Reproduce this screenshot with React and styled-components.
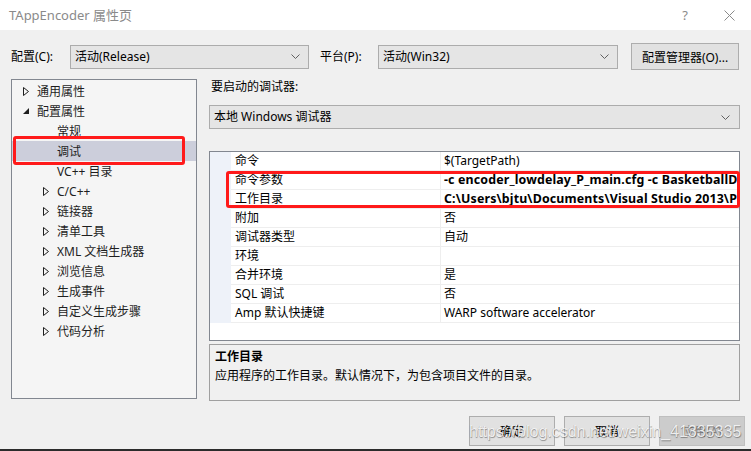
import React from "react";
import styled, { createGlobalStyle, css } from "styled-components";

const Global = createGlobalStyle`
  html, body { margin: 0; padding: 0; background: #f0f0f0; }
  body {
    font-family: "Noto Sans", "Noto Sans CJK SC", sans-serif;
    font-size: 12px;
    color: #000;
  }
  * { box-sizing: border-box; }
`;

const Window = styled.div`
  width: 751px;
  height: 451px;
  display: flex;
  flex-direction: column;
  position: relative;
  overflow: hidden;
  background: #f0f0f0;
`;

const TitleBar = styled.div`
  height: 30px;
  flex-shrink: 0;
  background: #fff;
  display: flex;
  align-items: center;
  padding-left: 9px;
`;

const TitleText = styled.div`
  flex: 1;
  font-size: 13px;
  color: #8a8a8a;
  line-height: 30px;
`;

const TitleButton = styled.div`
  width: 44px;
  height: 30px;
  display: flex;
  align-items: center;
  justify-content: center;
  color: #8a8a8a;
  font-size: 13px;
`;

const Body = styled.div`
  flex: 1;
  display: flex;
  flex-direction: column;
  padding: 13px 11px 0 11px;
`;

const TopRow = styled.div`
  display: flex;
  align-items: center;
  height: 27px;
`;

const FieldLabel = styled.div`
  width: ${(p) => p.$w}px;
  margin-left: ${(p) => p.$ml || 0}px;
  line-height: 24px;
  white-space: nowrap;
`;

const Combo = styled.div`
  width: ${(p) => (p.$w ? `${p.$w}px` : "auto")};
  height: 24px;
  border: 1px solid #acacac;
  background: #e5e5e5;
  display: flex;
  align-items: center;
  justify-content: space-between;
  padding: 0 8px 0 4px;
  white-space: nowrap;
`;

const ComboText = styled.span`
  line-height: 22px;
`;

const Chevron = () => (
  <svg width="9" height="5" viewBox="0 0 9 5">
    <polyline points="0.5,0.5 4.5,4.5 8.5,0.5" fill="none" stroke="#606060" strokeWidth="1" />
  </svg>
);

const PushButton = styled.div`
  width: ${(p) => p.$w}px;
  height: ${(p) => p.$h}px;
  border: 1px solid #adadad;
  background: #e1e1e1;
  display: flex;
  align-items: center;
  justify-content: center;
  white-space: nowrap;
  ${(p) =>
    p.$disabled &&
    css`
      background: #cccccc;
      border-color: #bfbfbf;
      color: #838383;
    `}
`;

const ManagerButton = styled(PushButton)`
  margin-left: auto;
  margin-right: 1px;
`;

const Main = styled.div`
  display: flex;
  gap: 12px;
  margin-top: 9px;
`;

const Tree = styled.div`
  width: 186px;
  height: 320px;
  border: 1px solid #828790;
  background: #f5f5f5;
  padding-top: 1px;
  position: relative;
  flex-shrink: 0;
`;

const TreeRow = styled.div`
  height: 20px;
  display: flex;
  align-items: center;
  padding-left: ${(p) => 11 + p.$level * 20}px;
  color: #1e1e1e;
  white-space: nowrap;
  background: ${(p) => (p.$selected ? "#cccedb" : "transparent")};
`;

const ArrowBox = styled.span`
  width: 14px;
  display: flex;
  align-items: center;
`;

const Annotation = styled.div`
  position: absolute;
  border: 3px solid #ff1a1a;
  border-radius: 3px;
  pointer-events: none;
`;

const TreeMark = styled(Annotation)`
  left: 1px;
  top: 56px;
  width: 172px;
  height: 29px;
`;

const RightCol = styled.div`
  flex: 1;
  display: flex;
  flex-direction: column;
`;

const SectionLabel = styled.div`
  height: 16px;
  line-height: 16px;
  padding-left: 2px;
`;

const DebuggerCombo = styled(Combo)`
  margin-top: 10px;
  padding-left: 4px;
  padding-right: 9px;
`;

const Grid = styled.div`
  margin-top: 22px;
  height: 190px;
  border: 1px solid #828790;
  background: #fff;
  position: relative;
`;

const GridRow = styled.div`
  display: grid;
  grid-template-columns: 21px 210px 1fr;
  height: 19px;
`;

const Gutter = styled.div`
  background: #eef2f9;
`;

const NameCell = styled.div`
  border-bottom: 1px solid #eeeeee;
  border-right: 1px solid #eeeeee;
  padding-left: 4px;
  line-height: 18px;
  white-space: nowrap;
  overflow: hidden;
`;

const ValueCell = styled.div`
  border-bottom: 1px solid #eeeeee;
  padding-left: 3px;
  line-height: 18px;
  white-space: nowrap;
  overflow: hidden;
  ${(p) =>
    p.$bold &&
    css`
      font-weight: 700;
      font-size: 12.4px;
      letter-spacing: 0.15px;
    `}
`;

const GridMark = styled(Annotation)`
  left: 16px;
  top: 19px;
  right: -1px;
  height: 37px;
`;

const Description = styled.div`
  margin-top: 3px;
  height: 57px;
  border: 1px solid #a0a0a0;
  background: #f0f0f0;
  padding: 1px 5px;
`;

const DescTitle = styled.div`
  font-weight: 700;
  line-height: 21px;
`;

const DescText = styled.div`
  line-height: 18px;
`;

const ButtonRow = styled.div`
  display: flex;
  justify-content: flex-end;
  gap: 9px;
  margin-top: 15px;
  margin-right: -5px;
`;

const BottomEdge = styled.div`
  height: 2px;
  flex-shrink: 0;
  background: #2b2b2b;
`;

const Watermark = styled.div`
  position: absolute;
  left: 469px;
  top: 422px;
  font-family: "Liberation Sans", Arial, sans-serif;
  font-size: 16px;
  line-height: 20px;
  color: rgba(255, 255, 255, 0.85);
  text-shadow: 0.6px 0.6px 0.8px rgba(0, 0, 0, 0.35), -0.5px -0.5px 0.6px rgba(0, 0, 0, 0.2);
  white-space: nowrap;
  pointer-events: none;
`;

const Collapsed = () => (
  <svg width="6" height="9" viewBox="0 0 6 9">
    <polygon points="0.5,0.5 5.5,4.5 0.5,8.5" fill="none" stroke="#1e1e1e" strokeWidth="1" />
  </svg>
);

const Expanded = () => (
  <svg width="6" height="6" viewBox="0 0 6 6">
    <polygon points="6,0 6,6 0,6" fill="#1e1e1e" />
  </svg>
);

const treeItems = [
  { label: "通用属性", level: 0, arrow: "c" },
  { label: "配置属性", level: 0, arrow: "e" },
  { label: "常规", level: 1 },
  { label: "调试", level: 1, selected: true },
  { label: "VC++ 目录", level: 1 },
  { label: "C/C++", level: 1, arrow: "c" },
  { label: "链接器", level: 1, arrow: "c" },
  { label: "清单工具", level: 1, arrow: "c" },
  { label: "XML 文档生成器", level: 1, arrow: "c" },
  { label: "浏览信息", level: 1, arrow: "c" },
  { label: "生成事件", level: 1, arrow: "c" },
  { label: "自定义生成步骤", level: 1, arrow: "c" },
  { label: "代码分析", level: 1, arrow: "c" },
];

const props = [
  { name: "命令", value: "$(TargetPath)" },
  { name: "命令参数", value: "-c encoder_lowdelay_P_main.cfg -c BasketballDrill_832x480_50.cfg", bold: true },
  { name: "工作目录", value: "C:\\Users\\bjtu\\Documents\\Visual Studio 2013\\Projects\\HM\\bin", bold: true },
  { name: "附加", value: "否" },
  { name: "调试器类型", value: "自动" },
  { name: "环境", value: "" },
  { name: "合并环境", value: "是" },
  { name: "SQL 调试", value: "否" },
  { name: "Amp 默认快捷键", value: "WARP software accelerator" },
];

export default function App() {
  return (
    <>
      <Global />
      <Window>
        <TitleBar>
          <TitleText>TAppEncoder 属性页</TitleText>
          <TitleButton>?</TitleButton>
          <TitleButton>
            <svg width="11" height="11" viewBox="0 0 11 11">
              <path d="M0.5 0.5 L10.5 10.5 M10.5 0.5 L0.5 10.5" stroke="#8a8a8a" strokeWidth="1" />
            </svg>
          </TitleButton>
        </TitleBar>
        <Body>
          <TopRow>
            <FieldLabel $w={59}>配置(C):</FieldLabel>
            <Combo $w={239}>
              <ComboText>活动(Release)</ComboText>
              <Chevron />
            </Combo>
            <FieldLabel $w={58} $ml={11}>平台(P):</FieldLabel>
            <Combo $w={240}>
              <ComboText>活动(Win32)</ComboText>
              <Chevron />
            </Combo>
            <ManagerButton $w={108} $h={27}>配置管理器(O)...</ManagerButton>
          </TopRow>
          <Main>
            <Tree>
              {treeItems.map((it) => (
                <TreeRow key={it.label} $level={it.level} $selected={it.selected}>
                  <ArrowBox>
                    {it.arrow === "c" && <Collapsed />}
                    {it.arrow === "e" && <Expanded />}
                  </ArrowBox>
                  {it.label}
                </TreeRow>
              ))}
              <TreeMark />
            </Tree>
            <RightCol>
              <SectionLabel>要启动的调试器:</SectionLabel>
              <DebuggerCombo>
                <ComboText>本地 Windows 调试器</ComboText>
                <Chevron />
              </DebuggerCombo>
              <Grid>
                {props.map((p) => (
                  <GridRow key={p.name}>
                    <Gutter />
                    <NameCell>{p.name}</NameCell>
                    <ValueCell $bold={p.bold}>{p.value}</ValueCell>
                  </GridRow>
                ))}
                <GridMark />
              </Grid>
              <Description>
                <DescTitle>工作目录</DescTitle>
                <DescText>应用程序的工作目录。默认情况下，为包含项目文件的目录。</DescText>
              </Description>
            </RightCol>
          </Main>
          <ButtonRow>
            <PushButton $w={86} $h={30}>确定</PushButton>
            <PushButton $w={86} $h={30}>取消</PushButton>
            <PushButton $w={86} $h={30} $disabled>应用(A)</PushButton>
          </ButtonRow>
        </Body>
        <BottomEdge />
        <Watermark>https://blog.csdn.net/weixin_41335335</Watermark>
      </Window>
    </>
  );
}
